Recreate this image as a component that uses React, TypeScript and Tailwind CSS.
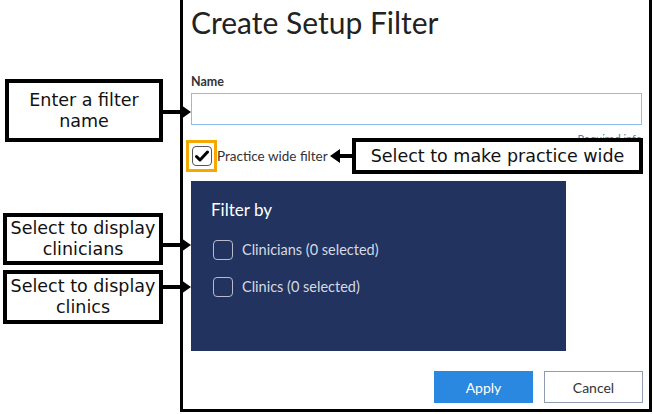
import React from 'react';

const Arrow: React.FC<{ className: string; width: number }> = ({ className, width }) => (
  <svg className={className} width={width} height={14} viewBox={`0 0 ${width} 14`}>
    <rect x={0} y={5} width={width - 8} height={4} fill="#000" />
    <polygon points={`${width - 10},0 ${width},7 ${width - 10},14`} fill="#000" />
  </svg>
);

const Callout: React.FC<{ className: string; children: React.ReactNode }> = ({ className, children }) => (
  <div
    className={`absolute flex items-center justify-center border-[4px] border-black bg-white text-center text-[17.5px] leading-[21px] text-[#111] font-['DejaVu_Sans',sans-serif] ${className}`}
  >
    {children}
  </div>
);

const Box: React.FC = () => (
  <span className="inline-block h-[20px] w-[20px] rounded-[4px] border-[1.5px] border-[#b6bccb]" />
);

export default function App() {
  return (
    <div className="relative flex h-[414px] w-[653px] overflow-hidden bg-white font-['Lato',sans-serif]">
      <div className="w-[180px] shrink-0" />

      {/* dialog */}
      <div className="flex h-[412px] w-[472px] flex-col border-x-[3px] border-b-[3px] border-black bg-white pl-[8px] pr-[7px]">
        <h1 className="mt-[4px] text-[30px] font-normal leading-[36px] text-[#222]">Create Setup Filter</h1>

        <label className="mt-[34px] text-[12.5px] font-bold leading-[16px] text-[#333]">Name</label>
        <div className="mt-[3px] h-[32px] w-[451px] border-[1.5px] border-[#8cbcf0] bg-white" />
        <div className="mt-[8px] h-[7px] w-[451px] text-right text-[11px] leading-[12px] text-[#4a7fc1]">Required info</div>

        <div className="flex items-center">
          <div className="ml-[-5px] flex h-[32px] w-[31px] items-center justify-center border-[3px] border-[#f5a800]">
            <span className="flex h-[20px] w-[20px] items-center justify-center rounded-[4px] border-[1.5px] border-[#555] bg-white">
              <svg width="14" height="12" viewBox="0 0 14 12">
                <path d="M1.5 6.5 L5 10 L12.5 2" fill="none" stroke="#000" strokeWidth="3" strokeLinecap="round" strokeLinejoin="round" />
              </svg>
            </span>
          </div>
          <span className="text-[13.5px] text-[#333]">Practice wide filter</span>
        </div>

        <div className="mt-[9px] flex h-[170px] w-[375px] flex-col bg-[#21335e] pl-[20px] pt-[19px]">
          <div className="text-[17px] leading-[20px] text-white">Filter by</div>
          <div className="mt-[19px] flex items-center gap-[9px] pl-[2px]">
            <Box />
            <span className="text-[14.5px] text-[#d6dae3]">Clinicians (0 selected)</span>
          </div>
          <div className="mt-[15px] flex items-center gap-[9px] pl-[2px]">
            <Box />
            <span className="text-[14.5px] text-[#d6dae3]">Clinics (0 selected)</span>
          </div>
        </div>

        <div className="mr-[-1px] mt-[20px] flex justify-end gap-[11px]">
          <button className="h-[32px] w-[99px] bg-[#2b88e0] text-[14px] text-white">Apply</button>
          <button className="h-[32px] w-[99px] border-[1.5px] border-[#8e9bb0] bg-white text-[14px] text-[#333]">Cancel</button>
        </div>
      </div>

      {/* annotations */}
      <Callout className="left-[5px] top-[79px] h-[63px] w-[158px]">
        Enter a filter<br />name
      </Callout>
      <Arrow className="absolute left-[162px] top-[105px]" width={29} />

      <Callout className="left-[352px] top-[138px] h-[36px] w-[291px]">Select to make practice wide</Callout>
      <svg className="absolute left-[330px] top-[149px]" width={23} height={14} viewBox="0 0 23 14">
        <rect x={8} y={5} width={15} height={4} fill="#000" />
        <polygon points="10,0 0,7 10,14" fill="#000" />
      </svg>

      <Callout className="left-[3px] top-[213px] h-[52px] w-[160px]">
        Select to display<br />clinicians
      </Callout>
      <Arrow className="absolute left-[162px] top-[238px]" width={29} />

      <Callout className="left-[3px] top-[270px] h-[54px] w-[160px]">
        Select to display<br />clinics
      </Callout>
      <Arrow className="absolute left-[162px] top-[280px]" width={29} />
    </div>
  );
}
